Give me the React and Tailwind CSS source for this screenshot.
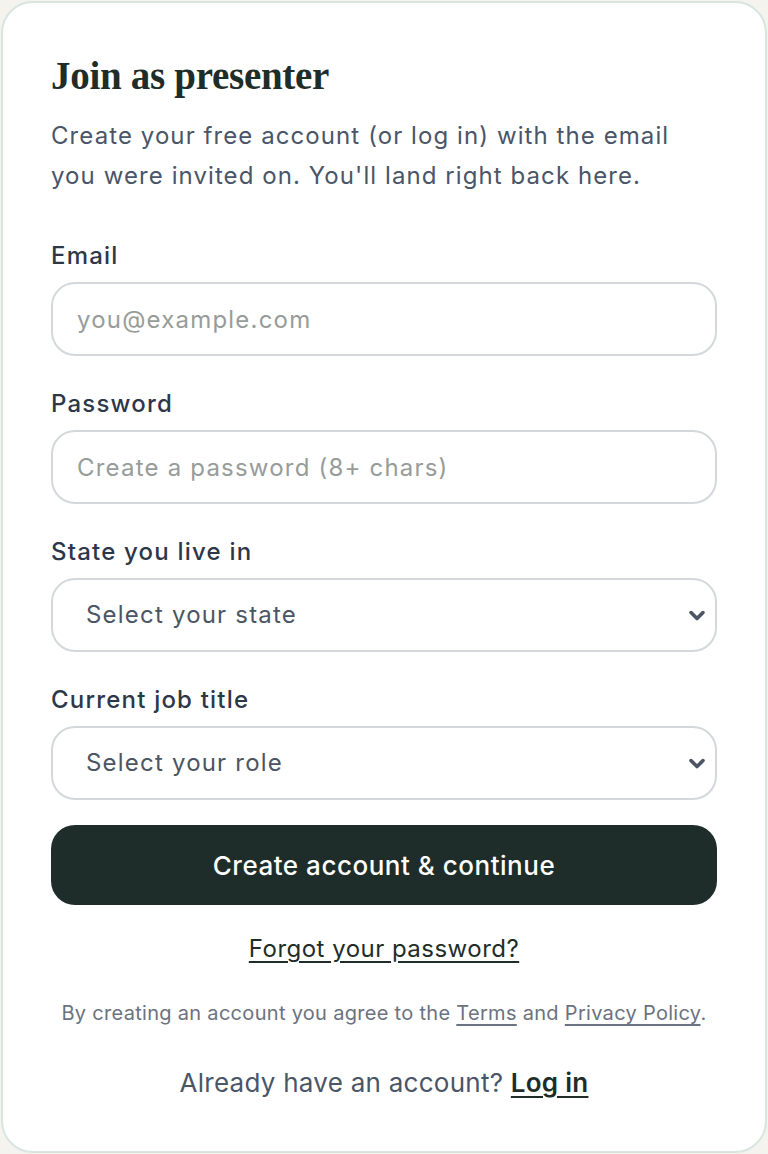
const Field = ({ label, children }) => (
    <div className="flex flex-col gap-[10px]">
        <label className="text-[24px] leading-[32px] font-medium tracking-[0.05em] text-[#2d3748]">{label}</label>
        {children}
    </div>
)

const Chevron = () => (
    <svg className="absolute right-[8px] top-1/2 -translate-y-1/2 pointer-events-none" width="24" height="24" viewBox="0 0 20 20" fill="none">
        <path d="M5 8l5 5 5-5" stroke="#4b5563" strokeWidth="3" strokeLinecap="round" strokeLinejoin="round" />
    </svg>
)

const SelectBox = ({ text }) => (
    <div className="relative">
        <select className="w-full h-[74px] appearance-none rounded-[24px] border-2 border-[#d4d7dc] bg-white pl-[33px] pr-12 text-[24px] tracking-[0.05em] text-[#4b5563] outline-none">
            <option>{text}</option>
        </select>
        <Chevron />
    </div>
)

const App = () => {
    return (
        <div className="min-h-[1154px] bg-[#f5f3ee] p-px" style={{ fontFamily: 'Inter, "Noto Sans", sans-serif' }}>
            <div className="min-h-[1152px] rounded-[32px] border-2 border-[#d8e6df] bg-white px-12 pt-[49px] pb-[50px]">
                <h1 className="text-[39px] leading-[48px] font-bold tracking-[-0.3px] text-[#1f2d28]" style={{ fontFamily: '"Liberation Serif", "DejaVu Serif", serif' }}>
                    Join as presenter
                </h1>
                <p className="mt-[16px] text-[24px] leading-[40px] tracking-[0.045em] text-[#4a5568]">
                    Create your free account (or log in) with the email you were invited on. You'll land right back here.
                </p>

                <div className="mt-[44px] flex flex-col gap-[32px]">
                    <Field label="Email">
                        <input
                            type="email"
                            placeholder="you@example.com"
                            className="h-[74px] w-full rounded-[24px] border-2 border-[#d4d7dc] px-6 text-[24px] tracking-[0.05em] text-[#2d3748] placeholder:text-[#979c9a] outline-none"
                        />
                    </Field>
                    <Field label="Password">
                        <input
                            type="password"
                            placeholder="Create a password (8+ chars)"
                            className="h-[74px] w-full rounded-[24px] border-2 border-[#d4d7dc] px-6 text-[24px] tracking-[0.05em] text-[#2d3748] placeholder:text-[#979c9a] outline-none"
                        />
                    </Field>
                    <Field label="State you live in">
                        <SelectBox text="Select your state" />
                    </Field>
                    <Field label="Current job title">
                        <SelectBox text="Select your role" />
                    </Field>
                </div>

                <button className="mt-[25px] h-[80px] w-full rounded-[24px] bg-[#1f2d2a] text-[26px] font-medium tracking-[0.02em] text-white">
                    Create account &amp; continue
                </button>

                <div className="mt-[28px] text-center">
                    <a href="#" className="text-[24px] leading-[32px] tracking-[0.02em] text-[#1f2d28] underline underline-offset-4">
                        Forgot your password?
                    </a>
                </div>

                <p className="mt-[34px] text-center text-[20px] leading-[28px] tracking-[0.015em] text-[#6b7280]">
                    By creating an account you agree to the{' '}
                    <a href="#" className="underline underline-offset-4">Terms</a> and{' '}
                    <a href="#" className="underline underline-offset-4">Privacy Policy</a>.
                </p>

                <p className="mt-[39px] text-center text-[26px] leading-[34px] tracking-[0.01em] text-[#4a5568]">
                    Already have an account?{' '}
                    <a href="#" className="font-semibold text-[#1f2d28] underline underline-offset-4">Log in</a>
                </p>
            </div>
        </div>
    )
}

export default App
